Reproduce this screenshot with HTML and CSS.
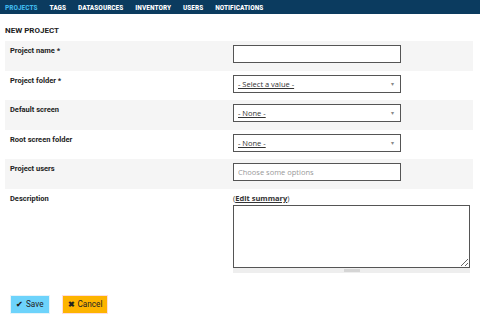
FILE: index.html
```html
<!DOCTYPE html>
<html>
  <head>
    <title>New project</title>
    <link rel="stylesheet" href="styles.css">
  </head>
  <body>
    <div class="nav">
      <a class="active" href="#">PROJECTS</a>
      <a href="#">TAGS</a>
      <a href="#">DATASOURCES</a>
      <a href="#">INVENTORY</a>
      <a href="#">USERS</a>
      <a href="#">NOTIFICATIONS</a>
    </div>

    <h1>NEW PROJECT</h1>

    <form class="form">
      <div class="row">
        <label>Project name *</label>
        <div class="field"><input class="text" type="text"></div>
      </div>
      <div class="row">
        <label>Project folder *</label>
        <div class="field">
          <div class="select"><span>- Select a value -</span><i>&#9662;</i></div>
        </div>
      </div>
      <div class="row">
        <label>Default screen</label>
        <div class="field">
          <div class="select"><span>- None -</span><i>&#9662;</i></div>
        </div>
      </div>
      <div class="row">
        <label>Root screen folder</label>
        <div class="field">
          <div class="select"><span>- None -</span><i>&#9662;</i></div>
        </div>
      </div>
      <div class="row">
        <label>Project users</label>
        <div class="field"><input class="text" type="text" placeholder="Choose some options"></div>
      </div>
      <div class="row desc">
        <label>Description</label>
        <div class="field">
          <div class="summary">(<a href="#">Edit summary</a>)</div>
          <textarea></textarea>
          <div class="grippie"><span></span></div>
        </div>
      </div>

      <div class="actions">
        <button type="button" class="btn save"><b>&#10004;</b> Save</button>
        <button type="button" class="btn cancel"><b>&#10006;</b> Cancel</button>
      </div>
    </form>
  </body>
</html>
```

FILE: styles.css
```css
body {
  margin: 0;
  font-family: Roboto, "Liberation Sans", sans-serif;
  color: #222;
  background-color: #fff;
}

.nav {
  display: flex;
  height: 14px;
  background-color: #0b3b5f;
  padding-left: 5px;
  gap: 12px;
  align-items: center;
}

.nav a {
  color: #fff;
  font-family: "Liberation Sans Narrow", "Roboto Condensed", Roboto, sans-serif;
  font-size: 7.5px;
  font-weight: bold;
  text-decoration: none;
}

.nav a.active {
  color: #3fb8ec;
}

h1 {
  font-size: 8px;
  font-weight: bold;
  margin: 12px 0 0 5px;
  height: 15px;
  line-height: 10px;
}

.form {
  margin: 0 7px 0 5px;
}

.row {
  display: flex;
  height: 29.6px;
  box-sizing: border-box;
  padding-top: 4px;
}

.row:nth-child(odd) {
  background-color: #f5f5f5;
}

.row label {
  width: 223px;
  padding-left: 5px;
  font-size: 7.5px;
  font-weight: bold;
  line-height: 12px;
  color: #222;
}

.field {
  width: 168px;
}

.text,
.select {
  display: block;
  width: 168px;
  height: 18px;
  box-sizing: border-box;
  border: 1px solid #555;
  background-color: #fff;
  font-family: "Open Sans", "Liberation Sans", sans-serif;
  font-size: 7.5px;
  padding: 0 4px;
  margin: 0;
}

.text::placeholder {
  color: #999;
}

.select {
  display: flex;
  align-items: center;
  justify-content: space-between;
  color: #333;
}

.select span {
  text-decoration: underline;
}

.select i {
  font-style: normal;
  color: #888;
  font-size: 6px;
  margin-right: 2px;
}

.row.desc {
  height: auto;
}

.desc .field {
  width: 237px;
}

.summary {
  font-family: "Open Sans", "Liberation Sans", sans-serif;
  font-size: 7.5px;
  line-height: 10px;
  height: 12px;
  color: #333;
}

.summary a {
  color: #333;
  font-weight: bold;
}

textarea {
  display: block;
  width: 237px;
  height: 63px;
  box-sizing: border-box;
  border: 1px solid #555;
  margin: 0;
  resize: vertical;
}

.grippie {
  height: 5px;
  background-color: #eee;
  display: flex;
  justify-content: center;
  align-items: center;
}

.grippie span {
  width: 16px;
  height: 3px;
  background-color: #d5d5d5;
}

.actions {
  display: flex;
  gap: 12px;
  padding: 22px 0 0 5px;
}

.btn {
  height: 19px;
  border: 1px solid #e6f4fa;
  font-family: Roboto, "Liberation Sans", sans-serif;
  font-size: 8.2px;
  color: #222;
  padding: 0 5px;
  display: flex;
  align-items: center;
  gap: 3px;
}

.btn b {
  font-size: 8px;
}

.save {
  background-color: #6dd3fb;
}

.cancel {
  background-color: #fdb400;
  border-color: #fdd;
}
```
